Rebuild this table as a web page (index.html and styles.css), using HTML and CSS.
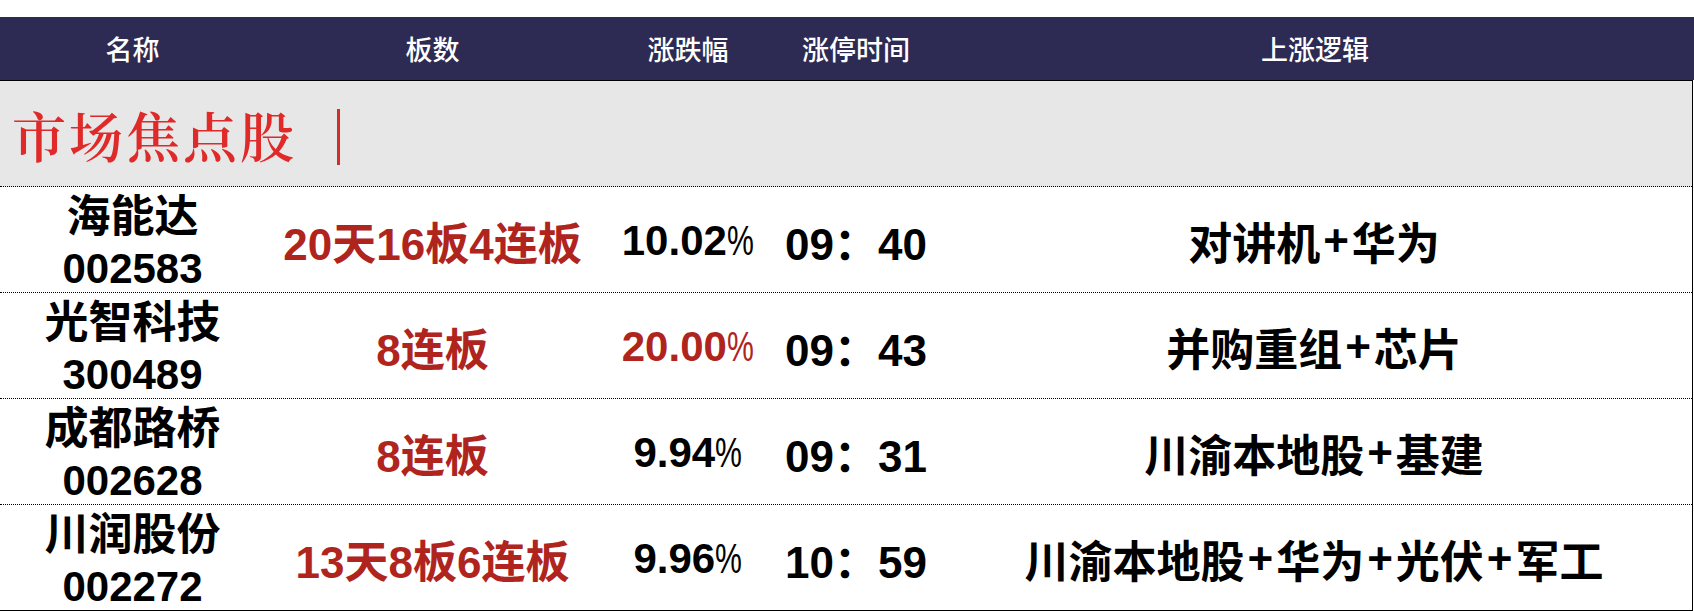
FILE: index.html
```html
<!DOCTYPE html>
<html lang="zh-CN">
<head>
<meta charset="utf-8">
<title>市场焦点股</title>
<link rel="stylesheet" href="styles.css">
</head>
<body>
<div class="sheet">
  <div class="head cols">
    <div class="cell">名称</div>
    <div class="cell">板数</div>
    <div class="cell">涨跌幅</div>
    <div class="cell">涨停时间</div>
    <div class="cell">上涨逻辑</div>
  </div>
  <div class="body">
    <div class="section">
      <span class="section-title">市场焦点股</span>
      <span class="section-bar"></span>
    </div>
    <div class="row cols">
      <div class="cell name"><span>海能达</span><span class="code">002583</span></div>
      <div class="cell boards">20天16板4连板</div>
      <div class="cell pct">10.02<span class="pc">%</span></div>
      <div class="cell time">09：40</div>
      <div class="cell logic">对讲机<span class="plus">+</span>华为</div>
    </div>
    <div class="row cols">
      <div class="cell name"><span>光智科技</span><span class="code">300489</span></div>
      <div class="cell boards">8连板</div>
      <div class="cell pct up">20.00<span class="pc">%</span></div>
      <div class="cell time">09：43</div>
      <div class="cell logic">并购重组<span class="plus">+</span>芯片</div>
    </div>
    <div class="row cols">
      <div class="cell name"><span>成都路桥</span><span class="code">002628</span></div>
      <div class="cell boards">8连板</div>
      <div class="cell pct">9.94<span class="pc">%</span></div>
      <div class="cell time">09：31</div>
      <div class="cell logic">川渝本地股<span class="plus">+</span>基建</div>
    </div>
    <div class="row cols last">
      <div class="cell name"><span>川润股份</span><span class="code">002272</span></div>
      <div class="cell boards">13天8板6连板</div>
      <div class="cell pct">9.96<span class="pc">%</span></div>
      <div class="cell time">10：59</div>
      <div class="cell logic">川渝本地股<span class="plus">+</span>华为<span class="plus">+</span>光伏<span class="plus">+</span>军工</div>
    </div>
  </div>
</div>
</body>
</html>
```

FILE: styles.css
```css
html, body {
  margin: 0;
  padding: 0;
  background: #ffffff;
}

body {
  font-family: "Liberation Sans", "Noto Sans CJK SC", sans-serif;
  color: #000000;
}

.sheet {
  padding-top: 17px;
  width: 1694px;
}

.cols {
  display: grid;
  grid-template-columns: 265px 335px 176px 160px 1fr;
}

.cell {
  display: flex;
  align-items: center;
  justify-content: center;
  text-align: center;
  white-space: nowrap;
}

.head {
  height: 63px;
  background: #2d2b53;
  color: #ffffff;
  font-size: 27px;
  font-weight: 500;
}

.body {
  width: 1692px;
  border-top: 1px solid #000000;
  border-right: 1px solid #000000;
}

.section {
  height: 105px;
  background: #e7e7e7;
  border-bottom: 1px dotted #000000;
  display: flex;
  align-items: center;
  padding-left: 12px;
}

.section-title {
  font-family: "Noto Serif CJK SC", "Noto Sans CJK SC", serif;
  font-size: 54px;
  font-weight: 600;
  color: #e02a2a;
  letter-spacing: 3px;
  padding-top: 1px;
}

.section-bar {
  width: 3px;
  height: 56px;
  background: #d42b2b;
  margin-left: 40px;
  margin-top: 6px;
}

.row {
  height: 105px;
  border-bottom: 1px dotted #000000;
  font-size: 44px;
  font-weight: 700;
}

.row.last {
  border-bottom: 1px solid #000000;
}

.name {
  flex-direction: column;
  line-height: 52px;
  padding-top: 4px;
}

.code {
  font-size: 42px;
}

.boards {
  color: #b0241e;
}

.pct {
  font-size: 42px;
}

.pc {
  display: inline-block;
  font-weight: 400;
  transform: scaleX(0.72);
  transform-origin: left center;
  margin-right: -10px;
}

.pct.up {
  color: #b0241e;
}

.plus {
  margin: 0 3px;
}
```
